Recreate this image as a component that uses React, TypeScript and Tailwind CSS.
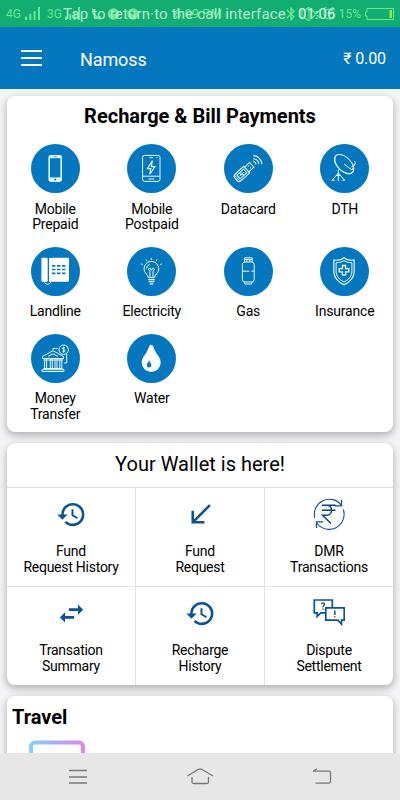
import type { ReactNode } from 'react';
import { MdBluetooth, MdCallReceived, MdHistory, MdSwapHoriz } from 'react-icons/md';

const services: { label: string; icon: ReactNode }[] = [
  {
    label: 'Mobile\nPrepaid',
    icon: (
      <>
        <rect x="17.4" y="11" width="13.6" height="27" rx="2.4" fill="currentColor" stroke="none" />
        <rect x="19" y="14.2" width="10.4" height="19.2" fill="#0477bf" stroke="none" />
        <path d="M22.5 12.7h3.5" stroke="#0477bf" strokeWidth="0.7" />
        <circle cx="24.2" cy="35.6" r="1" fill="#0477bf" stroke="none" />
      </>
    ),
  },
  {
    label: 'Mobile\nPostpaid',
    icon: (
      <>
        <rect x="15.6" y="11.4" width="17.4" height="26" rx="2" />
        <path d="M15.6 32.2h17.4M21.5 35h5.6M22.4 13.6h3.6M29.5 13.6h1" />
        <path d="M25.4 16.6l-5 8h3.4l-1 5.6 5.2-7.6h-3.6z" strokeWidth="1.1" />
      </>
    ),
  },
  {
    label: 'Datacard',
    icon: (
      <>
        <g transform="rotate(-43 20 28)">
          <path d="M12 23.6h11.5v8.8H12q-2.8 0-2.8-2.8v-3.2q0-2.8 2.8-2.8z" strokeWidth="1.2" />
          <path d="M23.5 24.8h7v6.4h-7M12.5 25.6h9v4.8h-9z" />
          <path d="M14 28h6M15.5 28l2-1.6M16 28l2 1.5M26.5 26.6h2M26.5 29.4h2" strokeWidth="0.9" />
          <path d="M11 24.6v6.8" strokeWidth="0.8" />
        </g>
        <path d="M29 17.4a3.2 3.2 0 0 1 3 3M29.2 14.7a6 6 0 0 1 5.5 5.5M29.2 11.6a9 9 0 0 1 8.6 8.6" strokeWidth="1.1" />
      </>
    ),
  },
  {
    label: 'DTH',
    icon: (
      <>
        <ellipse cx="24.2" cy="20" rx="11.8" ry="6.7" transform="rotate(45 24.2 20)" />
        <path d="M15 13.5c-2.4 6.5 6.4 16.4 15 16.5l3-2.5" />
        <path d="M24 20l8 6 3.2-6.6M31.5 23.2l3.8-4M35.8 18.3l-1.6-1" />
        <path d="M18.3 25.5v11.8M18.3 29l-5.8 7M18.3 29l6 7M11.6 36.2h3M22.2 36.2h3M16.2 31.5h4.4" />
      </>
    ),
  },
  {
    label: 'Landline',
    icon: (
      <>
        <rect x="10.4" y="10.7" width="6.3" height="24" rx="1.2" fill="#fff" stroke="none" />
        <path d="M18 11.2l4-.5h14.6q1.4 0 1.4 1.4v21.2q0 1.4-1.4 1.4H18z" fill="#fff" stroke="none" />
        <path d="M13.5 34.5c0 3.7 6.3 3.7 6.3-.2" />
        <path d="M21 18.8h3.4M26 18.8h3.4M31 18.8h3.4M21 22.5h3.4M26 22.5h3.4M31 22.5h3.4M21 26.3h3.4M26 26.3h3.4M31 26.3h3.4" stroke="#0477bf" strokeWidth="1.7" />
      </>
    ),
  },
  {
    label: 'Electricity',
    icon: (
      <>
        <path d="M21.2 30.6c0-3.4-4.2-4.3-4.2-8.8a7.4 7.4 0 0 1 14.8 0c0 4.5-4.2 5.4-4.2 8.8z" />
        <path d="M22.9 30v-5.6l-1.6-2.2 2-1 1.1 2.2 1.2-2.2 2 1-1.6 2.2V30M19.4 21.4a5 5 0 0 1 3.2-4" />
        <path d="M21.2 32.6h6.6M21.7 34.7h5.6M22.8 36.9h3.4" strokeWidth="1.3" />
        <path d="M14 16.8l1.6 1M18.8 12.4l1 1.8M24.4 11v1.8M30 12.4l-1 1.8M34.8 16.8l-1.7 1" />
      </>
    ),
  },
  {
    label: 'Gas',
    icon: (
      <>
        <rect x="18.4" y="15" width="11.8" height="20" rx="2.6" />
        <path d="M20.4 10.8h7.8v4.2M20.4 10.8V15M20.4 12.4h7.8M22.8 12.4V15M25.8 12.4V15" />
        <path d="M18.4 24.2h7M27.4 24.2h2.8M20.8 35v2h7v-2" />
      </>
    ),
  },
  {
    label: 'Insurance',
    icon: (
      <>
        <path d="M24 10.8c-2.3 2-6 2.8-10.2 2.3v11.2c0 7 4.5 10.8 10.2 13.5 5.7-2.7 10.2-6.5 10.2-13.5V13.1c-4.2.5-7.9-.3-10.2-2.3z" strokeWidth="1.2" />
        <path d="M24 13.5c-2.5 1.7-4.8 2.2-7.9 2.1v8.5c0 5.3 3.1 8.4 7.9 10.9 4.8-2.5 7.9-5.6 7.9-10.9v-8.5c-3.1.1-5.4-.4-7.9-2.1z" />
        <path d="M22.4 18.5h3.2v3.2h3.2v3.2h-3.2v3.2h-3.2v-3.2h-3.2v-3.2h3.2z" strokeWidth="1.3" />
      </>
    ),
  },
  {
    label: 'Money\nTransfer',
    icon: (
      <>
        <path d="M11.5 24.5v-2L22 16.7l10.5 5.8v2zM17 22.5l5-2.7 5 2.7" />
        <path d="M13.6 25v9M15.6 25v9M19.3 25v9M21.3 25v9M24 25v9M26 25v9M28.8 25v9M30.8 25v9" />
        <path d="M12.5 34.5h19.3M11 37.5h22v-1.8H11zM12.5 26h19.3" />
        <circle cx="32.7" cy="15.7" r="4.7" />
        <path d="M34 14c-2.3-1.2-3.5 1-1.2 1.6 2.3.6 1.2 2.9-1.3 1.7M32.7 12.7v6" />
        <path d="M22 16v-1.5h4.5M35.7 20v9h-2.5" />
      </>
    ),
  },
  {
    label: 'Water',
    icon: (
      <>
        <path d="M24.2 10.7c2.3 0 2.2 3.5 4.5 7.2 2.5 4 5 6.4 5 10.6a9.5 9.5 0 0 1-19 0c0-4.2 2.5-6.6 5-10.6 2.3-3.7 2.2-7.2 4.5-7.2z" fill="#fff" stroke="none" />
        <path d="M22.1 26.2c.5 2 2.3 3.2 2.3 5a2.3 2.3 0 0 1-4.6 0c0-1.8 1.8-3 2.3-5z" fill="#0477bf" stroke="none" />
      </>
    ),
  },
];

const DmrIcon = () => (
  <svg className="h-8 w-8" viewBox="0 0 32 32" fill="none" stroke="currentColor" strokeWidth="1.1">
    <path d="M1.8 20A15 15 0 0 1 28.3 7.2M30.3 11.5A15 15 0 0 1 4 25.2" />
    <path d="M28.5 1.8v6.1h-6.8M3.5 30v-6.1h6.7" strokeWidth="1.3" />
    <path d="M9 7.3h13.5M9 12.3h13.5M9 7.3h4.5c6.8 0 6.8 10 0 10H9.5L18 25.5" stroke="#0a3f8f" strokeWidth="1.5" />
  </svg>
);

const DisputeIcon = () => (
  <svg className="h-8 w-8" viewBox="0 0 32 32" fill="none" stroke="currentColor" strokeWidth="1.7">
    <path d="M12 15.8H7.8L4.2 19.5v-3.7H1.3V3h18v7" />
    <path d="M12.8 10.8h18.4v12.4h-2.7v4l-3.7-4h-12z" />
    <path d="M8.5 7.2c0-1.8 3-1.8 3 .1 0 1.3-1.5 1.2-1.5 2.900" stroke="#0a4a9c" strokeWidth="1.3" />
    <path d="M21.8 13.4v4.5" strokeWidth="1.5" />
    <path d="M10 11.5v1.4M21.8 19v1.5" stroke="#c5484c" strokeWidth="1.5" />
  </svg>
);

const walletItems: { label: string; icon: ReactNode }[] = [
  { label: 'Fund\nRequest History', icon: <MdHistory size={31} /> },
  { label: 'Fund\nRequest', icon: <MdCallReceived size={31} /> },
  { label: 'DMR\nTransactions', icon: <DmrIcon /> },
  { label: 'Transation\nSummary', icon: <MdSwapHoriz size={31} /> },
  { label: 'Recharge\nHistory', icon: <MdHistory size={31} /> },
  { label: 'Dispute\nSettlement', icon: <DisputeIcon /> },
];

function Signal() {
  return (
    <svg className="h-[13px] w-4 shrink-0" viewBox="0 0 16 13" fill="currentColor">
      <path d="M0 9.5h2V13H0zM4.3 7h2v6h-2zM8.6 4h2v9h-2zM13 0h2v13h-2z" />
    </svg>
  );
}

function StatusBar() {
  return (
    <div className="relative h-[27px] shrink-0 bg-[#12ad70] text-[#68e895]">
      <div className="flex h-full items-center whitespace-nowrap px-[6px] text-[12px]">
        <span className="w-[19px]">4G</span>
        <Signal />
        <span className="ml-[6px] w-[18px]">3G</span>
        <Signal />
        <svg className="ml-[7px] h-[14px] w-[70px] shrink-0" viewBox="0 0 70 14" fill="currentColor">
          <path d="M4 1l3 3-1 2 4 4 2-1 2 3q-3 2-7-2T4 1z" />
          <circle cx="25.5" cy="7" r="5.8" />
          <circle cx="45" cy="7" r="5.8" />
          <path d="M22 6h7M42 6h6" stroke="#12ad70" strokeWidth="1.5" />
          <circle cx="59.5" cy="7" r="1.1" />
          <circle cx="64" cy="7" r="1.1" />
          <circle cx="68.5" cy="7" r="1.1" />
        </svg>
        <span className="ml-[16px] text-[13px]">6:09 PM</span>
        <MdBluetooth className="ml-auto shrink-0" size={16} />
        <svg className="ml-[2px] mr-[4px] h-[14px] w-[34px] shrink-0" viewBox="0 0 34 14" fill="none" stroke="currentColor" strokeWidth="1.2">
          <path d="M1 3v8h3l4 3V0L4 3zM11 3l8 8M19 3l-8 8" />
          <circle cx="28" cy="7" r="5" />
          <path d="M28 4v3h3M22 3l3-3M31 0l3 3" />
        </svg>
        <span className="mr-[4px]">15%</span>
        <svg className="h-[12px] w-[29px] shrink-0" viewBox="0 0 29 12" fill="none" stroke="currentColor">
          <path d="M2 .5h26.5v11H2V8H.5V4H2z" />
          <path d="M24.5 2H27v8h-2.5z" fill="#9be43c" stroke="none" />
        </svg>
      </div>
      {/* in-call banner shown on top of the system icons */}
      <div className="absolute inset-0 flex items-center whitespace-nowrap pl-[63px] pt-[2px] text-[15px] text-[#b5ead1]">
        <span className="w-[235px] tracking-[0.18px]">Tap to return to the call interface</span>
        <span className="text-[#d8f5e7]">01:06</span>
      </div>
    </div>
  );
}

function Card({ className, children }: { className?: string; children: ReactNode }) {
  return (
    <section className={`shrink-0 rounded-lg bg-white shadow-[0_3px_7px_1px_rgba(0,0,0,0.25)] ${className ?? ''}`}>
      {children}
    </section>
  );
}

export default function App() {
  return (
    <div className="flex h-[800px] w-[400px] flex-col overflow-hidden bg-[#f4f3f5] font-[Roboto,sans-serif] text-black">
      <StatusBar />
      <header className="flex h-[62px] shrink-0 items-center bg-[#0477bf] pl-[21px] pr-[14px] text-white">
        <div className="flex w-[21px] flex-col gap-[5px]">
          <span className="h-[2px] bg-white" />
          <span className="h-[2px] bg-white" />
          <span className="h-[2px] bg-white" />
        </div>
        <h1 className="ml-[38px] pt-[2px] text-[18px] tracking-[-0.1px]">Namoss</h1>
        <span className="ml-auto pt-[2px] text-[16px] tracking-[-0.1px]">₹ 0.00</span>
      </header>

      <main className="flex min-h-0 flex-1 flex-col gap-[11px] overflow-hidden px-[7px] pt-[7px]">
        <Card className="h-[336px]">
          <h2 className="pt-[6px] text-center text-[20px] font-bold leading-[28px]">Recharge &amp; Bill Payments</h2>
          <div className="mt-[14px] grid grid-cols-4">
            {services.map((item) => (
              <div key={item.label} className="flex flex-col items-center pb-[14px]">
                <svg className="h-[49px] w-[49px] rounded-full bg-[#0477bf] text-[#e8f8ff]" viewBox="0 0 49 49" fill="none" stroke="currentColor" strokeWidth="1">
                  {item.icon}
                </svg>
                <p className="mt-[8.5px] whitespace-pre-line text-center text-[14px] leading-[15.5px] tracking-[-0.2px]">{item.label}</p>
              </div>
            ))}
          </div>
        </Card>

        <Card className="h-[242px]">
          <h2 className="h-[44px] text-center text-[20px] leading-[42px]">Your Wallet is here!</h2>
          <div className="grid grid-cols-[129px_129px_1fr]">
            {walletItems.map((item) => (
              <div key={item.label} className="flex h-[99px] flex-col items-center border-r border-t border-[#e2e2e2] pt-[10px] nth-[3n]:border-r-0">
                <div className="flex h-8 items-center text-[#0b5394]">{item.icon}</div>
                <p className="mt-[14px] whitespace-pre-line text-center text-[14px] leading-[15.5px] tracking-[-0.25px]">{item.label}</p>
              </div>
            ))}
          </div>
        </Card>

        <Card className="h-[140px] px-[5px]">
          <h2 className="pt-[7px] text-[20px] font-bold leading-[28px]">Travel</h2>
          <svg className="ml-[17px] mt-[9px] h-14 w-14" viewBox="0 0 56 56" fill="none">
            <defs>
              <linearGradient id="travel" x1="0" y1="0" x2="1" y2="0">
                <stop offset="0" stopColor="#84d0f3" />
                <stop offset="1" stopColor="#df85ee" />
              </linearGradient>
            </defs>
            <rect x="2" y="2.5" width="52" height="52" rx="4" stroke="url(#travel)" strokeWidth="4" />
          </svg>
        </Card>
      </main>

      <nav className="flex h-[47px] shrink-0 items-center bg-[#e7e7e7] text-[#777]">
        <svg className="h-[47px] w-full" viewBox="0 0 400 47" fill="none" stroke="currentColor" strokeWidth="1.3">
          <path d="M69 17.5h18M69 24h18M69 30h18" />
          <path d="M187.5 23l10.5-6.5q2-1.2 4 0L213 23M192 24v5q0 1.5 1.5 1.5h13.5q1.5 0 1.5-1.5v-5" />
          <path d="M313 18.2h16q1.5 0 1.5 1.5v9q0 1.5-1.5 1.5h-13.5M313 18.2l4-2.5" />
        </svg>
      </nav>
    </div>
  );
}
